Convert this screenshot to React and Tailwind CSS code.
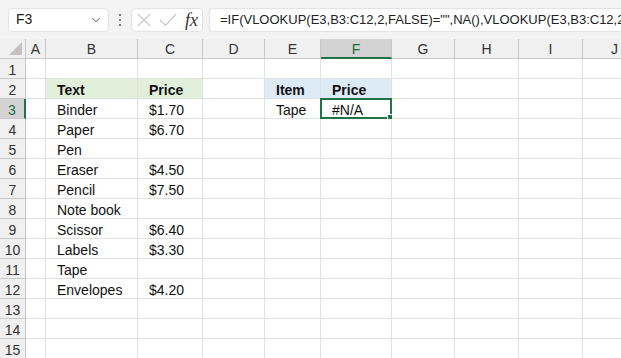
import { ChevronDown } from 'lucide-react';

const cols = [
  { key: 'A', w: 20 },
  { key: 'B', w: 92 },
  { key: 'C', w: 65 },
  { key: 'D', w: 62 },
  { key: 'E', w: 56 },
  { key: 'F', w: 71 },
  { key: 'G', w: 63 },
  { key: 'H', w: 64 },
  { key: 'I', w: 64 },
  { key: 'J', w: 64 },
];

const data = {
  2: { B: 'Text', C: 'Price', E: 'Item', F: 'Price' },
  3: { B: 'Binder', C: '$1.70', E: 'Tape', F: '#N/A' },
  4: { B: 'Paper', C: '$6.70' },
  5: { B: 'Pen' },
  6: { B: 'Eraser', C: '$4.50' },
  7: { B: 'Pencil', C: '$7.50' },
  8: { B: 'Note book' },
  9: { B: 'Scissor', C: '$6.40' },
  10: { B: 'Labels', C: '$3.30' },
  11: { B: 'Tape' },
  12: { B: 'Envelopes', C: '$4.20' },
};

const rows = Array.from({ length: 15 }, (_, i) => i + 1);

function cellBg(r, c) {
  if (r === 2 && (c === 'B' || c === 'C')) return 'bg-[#e2efda]';
  if (r === 2 && (c === 'E' || c === 'F')) return 'bg-[#ddebf7]';
  return 'bg-white';
}

function Toolbar() {
  return (
    <div className="h-[39px] bg-[#f3f3f3] flex items-center">
      <div className="ml-[8px] w-[101px] h-[24px] bg-white rounded-[4px] border border-[#e3e3e3] flex items-center pl-[7px] pr-[5px]">
        <span className="text-[14px] text-[#222]">F3</span>
        <ChevronDown className="w-[14px] h-[14px] ml-auto text-[#555]" strokeWidth={1.6} />
      </div>
      <div className="w-[22px] flex flex-col items-center gap-[3px]">
        <span className="w-[2px] h-[2px] bg-[#555] rounded-full" />
        <span className="w-[2px] h-[2px] bg-[#555] rounded-full" />
        <span className="w-[2px] h-[2px] bg-[#555] rounded-full" />
      </div>
      <div className="w-[72px] h-[24px] bg-white rounded-[4px] border border-[#e3e3e3] flex items-center pl-[5px]">
        <svg width="14" height="14" viewBox="0 0 14 14" className="ml-[0px]">
          <path d="M1 1 L13 13 M13 1 L1 13" stroke="#c8c8c8" strokeWidth="1.2" fill="none" />
        </svg>
        <svg width="18" height="14" viewBox="0 0 18 14" className="ml-[8px]">
          <path d="M1 7 L6.5 12.5 L17 1" stroke="#c8c8c8" strokeWidth="1.2" fill="none" />
        </svg>
        <span className="ml-[8px] italic text-[18px] text-[#333] font-['Liberation_Serif',serif] leading-none">fx</span>
      </div>
      <div className="ml-[6px] flex-1 h-[24px] bg-white rounded-l-[4px] border border-r-0 border-[#e3e3e3] flex items-center pl-[10px] overflow-hidden whitespace-nowrap">
        <span className="text-[13px] text-[#222]">=IF(VLOOKUP(E3,B3:C12,2,FALSE)="",NA(),VLOOKUP(E3,B3:C12,2,FALSE))</span>
      </div>
    </div>
  );
}

function Grid() {
  return (
    <div className="grid grid-cols-[26px_20px_92px_65px_62px_56px_71px_63px_64px_64px_64px] auto-rows-[20px]">
      <div className="bg-[#f0f0f0] border-r border-b border-[#c8c8c8] relative">
        <svg className="absolute right-[3px] bottom-[3px]" width="13" height="13" viewBox="0 0 13 13">
          <polygon points="13,0 13,13 0,13" fill="#c2c2c2" />
        </svg>
      </div>
      {cols.map((c) => (
        <div
          key={c.key}
          className={`flex items-center justify-center text-[14px] leading-none pt-[1px] border-r border-b ${
            c.key === 'F'
              ? 'bg-[#d3d3d3] text-[#1e6b41] border-b-2 border-b-[#217346] border-r-[#c8c8c8]'
              : 'bg-[#f0f0f0] text-[#333] border-[#c8c8c8]'
          }`}
        >
          {c.key}
        </div>
      ))}
      {rows.map((r) => (
        <Row key={r} r={r} />
      ))}
    </div>
  );
}

function Row({ r }) {
  const rowData = data[r] || {};
  return (
    <>
      <div
        className={`flex items-center justify-center text-[14px] leading-none pt-[3px] border-b ${
          r === 3
            ? 'bg-[#d3d3d3] text-[#1e6b41] border-r-2 border-r-[#217346] border-b-[#c8c8c8]'
            : 'bg-[#f0f0f0] text-[#333] border-r border-[#c8c8c8]'
        }`}
      >
        {r}
      </div>
      {cols.map((c) => {
        const v = rowData[c.key];
        const sel = r === 3 && c.key === 'F';
        return (
          <div
            key={c.key}
            className={`relative border-r border-b border-[#e1e1e1] flex items-center pl-[11px] pt-[3px] text-[14px] leading-none text-[#111] whitespace-nowrap ${cellBg(r, c.key)} ${
              r === 2 ? 'font-bold' : ''
            }`}
          >
            {v}
            {sel && (
              <>
                <div className="absolute left-[-1px] top-[-1px] right-[-1px] bottom-[-1px] border-2 border-[#217346]" />
                <div className="absolute right-[-3px] bottom-[-3px] w-[5px] h-[5px] bg-[#217346] border border-white box-content" />
              </>
            )}
          </div>
        );
      })}
    </>
  );
}

export default function App() {
  return (
    <div className="w-[621px] h-[358px] overflow-hidden bg-white font-['Liberation_Sans',Arial,sans-serif]">
      <Toolbar />
      <Grid />
    </div>
  );
}
